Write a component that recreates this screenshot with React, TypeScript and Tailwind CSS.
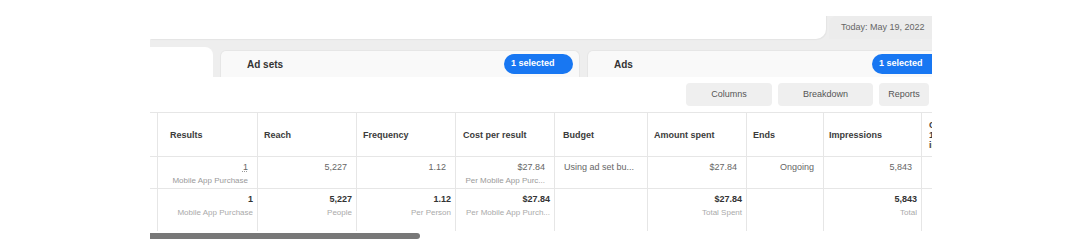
import React from 'react';

type Col = {
  title: string[];
  width: string;
  pad: string;
  r1?: string;
  r1sub?: string;
  r1left?: boolean;
  r2?: string;
  r2sub?: string;
};

const COLS: Col[] = [
  { title: ['Results'], width: 'w-[100px]', pad: 'pl-[12px]', r1: '1', r1sub: 'Mobile App Purchase', r2: '1', r2sub: 'Mobile App Purchase' },
  { title: ['Reach'], width: 'w-[99px]', pad: 'pl-[6px]', r1: '5,227', r2: '5,227', r2sub: 'People' },
  { title: ['Frequency'], width: 'w-[99px]', pad: 'pl-[6px]', r1: '1.12', r2: '1.12', r2sub: 'Per Person' },
  { title: ['Cost per result'], width: 'w-[99px]', pad: 'pl-[7px]', r1: '$27.84', r1sub: 'Per Mobile App Purc...', r2: '$27.84', r2sub: 'Per Mobile App Purch...' },
  { title: ['Budget'], width: 'w-[93px]', pad: 'pl-[8px]', r1: 'Using ad set bu...', r1left: true },
  { title: ['Amount spent'], width: 'w-[99px]', pad: 'pl-[6px]', r1: '$27.84', r2: '$27.84', r2sub: 'Total Spent' },
  { title: ['Ends'], width: 'w-[77px]', pad: 'pl-[6px]', r1: 'Ongoing' },
  { title: ['Impressions'], width: 'w-[98px]', pad: 'pl-[5px]', r1: '5,843', r2: '5,843', r2sub: 'Total' },
  { title: ['CPM (cost per', '1,000', 'impressions)'], width: 'w-[100px]', pad: 'pl-[7px]' },
];

const SelectedPill: React.FC = () => (
  <div className="h-[20px] w-[69px] shrink-0 rounded-full bg-[#1877f2] flex items-center pl-[7px] text-[9px] font-semibold text-white">
    1 selected
  </div>
);

const App: React.FC = () => {
  return (
    <div className="w-[1080px] h-[247px] bg-white pl-[150px] font-['Liberation_Sans',Arial,sans-serif]">
      <div className="w-[782px] h-full overflow-hidden">
        {/* top bar with date */}
        <div className="flex bg-[#eeeeee]">
          <div className="flex-1 h-[39px] bg-white rounded-br-[10px] shadow-[1px_1px_1px_rgba(0,0,0,0.04)]" />
          <div className="w-[106px] shrink-0 flex flex-col">
            <div className="h-[16px] bg-white" />
            <div className="h-[23px] ml-[3px] bg-[#ececec] rounded-tl-[8px] flex items-center pl-[12px] text-[9px] text-[#666] whitespace-nowrap">
              Today: May 19, 2022
            </div>
          </div>
        </div>

        {/* tabs */}
        <div className="h-[38px] bg-[#eeeeee] flex items-end">
          <div className="w-[63px] h-[30px] bg-white rounded-tr-[8px] shrink-0" />
          <div className="ml-[7px] w-[360px] h-[27px] bg-[#f9f9f9] rounded-t-[6px] border border-b-0 border-[#e6e6e6] flex items-center justify-between pl-[26px] pr-[6px] shrink-0">
            <span className="text-[10px] font-bold text-[#333]">Ad sets</span>
            <SelectedPill />
          </div>
          <div className="ml-[7px] w-[360px] h-[27px] bg-[#f9f9f9] rounded-t-[6px] border border-b-0 border-[#e6e6e6] flex items-center pl-[26px] shrink-0">
            <span className="text-[10px] font-bold text-[#333]">Ads</span>
            <div className="ml-[239px]">
              <SelectedPill />
            </div>
          </div>
        </div>

        {/* toolbar */}
        <div className="h-[35px] flex items-start justify-end pt-[6px] gap-[6px] pr-[3px]">
          <div className="w-[86px] h-[23px] rounded-[4px] bg-[#efefef] flex items-center justify-center text-[9px] text-[#555]">Columns</div>
          <div className="w-[95px] h-[23px] rounded-[4px] bg-[#efefef] flex items-center justify-center text-[9px] text-[#555]">Breakdown</div>
          <div className="w-[50px] h-[23px] rounded-[4px] bg-[#efefef] flex items-center justify-center text-[9px] text-[#555]">Reports</div>
        </div>

        {/* table */}
        <div className="flex w-[1000px] border-t border-[#e6e6e6]">
          <div className="w-[7px] shrink-0">
            <div className="h-[44px] border-b border-[#e6e6e6]" />
            <div className="h-[32px] border-b border-[#e6e6e6]" />
            <div className="h-[42px]" />
          </div>
          {COLS.map((c) => (
            <div key={c.title.join(' ')} className={`${c.width} shrink-0 border-l border-[#e6e6e6]`}>
              <div className={`h-[44px] border-b border-[#e6e6e6] flex flex-col justify-center ${c.pad} pr-[6px]`}>
                {c.title.map((t) => (
                  <div key={t} className="text-[9px] leading-[10px] font-bold text-[#3b3b3b] whitespace-nowrap">
                    {t}
                  </div>
                ))}
              </div>
              <div
                className={`h-[32px] border-b border-[#e6e6e6] pt-[5px] flex flex-col ${
                  c.r1left ? 'items-start pl-[9px]' : 'items-end pr-[9px]'
                }`}
              >
                {c.r1 && (
                  <div
                    className={`text-[9px] leading-[11px] text-[#666] whitespace-nowrap ${
                      c.title[0] === 'Results' ? 'underline decoration-dotted decoration-[#999]' : ''
                    }`}
                  >
                    {c.r1}
                  </div>
                )}
                {c.r1sub && (
                  <div className="mt-[3px] text-[8px] leading-[10px] text-[#9a9a9a] whitespace-nowrap">{c.r1sub}</div>
                )}
              </div>
              <div className="h-[42px] pt-[5px] pr-[4px] flex flex-col items-end">
                {c.r2 && <div className="text-[9px] leading-[11px] font-bold text-[#333] whitespace-nowrap">{c.r2}</div>}
                {c.r2sub && (
                  <div className="mt-[3px] text-[8px] leading-[10px] text-[#aaa] whitespace-nowrap">{c.r2sub}</div>
                )}
              </div>
            </div>
          ))}
        </div>

        {/* horizontal scrollbar */}
        <div className="mt-[2px] w-[270px] h-[6px] rounded-r-full bg-[#787878]" />
      </div>
    </div>
  );
};

export default App;
